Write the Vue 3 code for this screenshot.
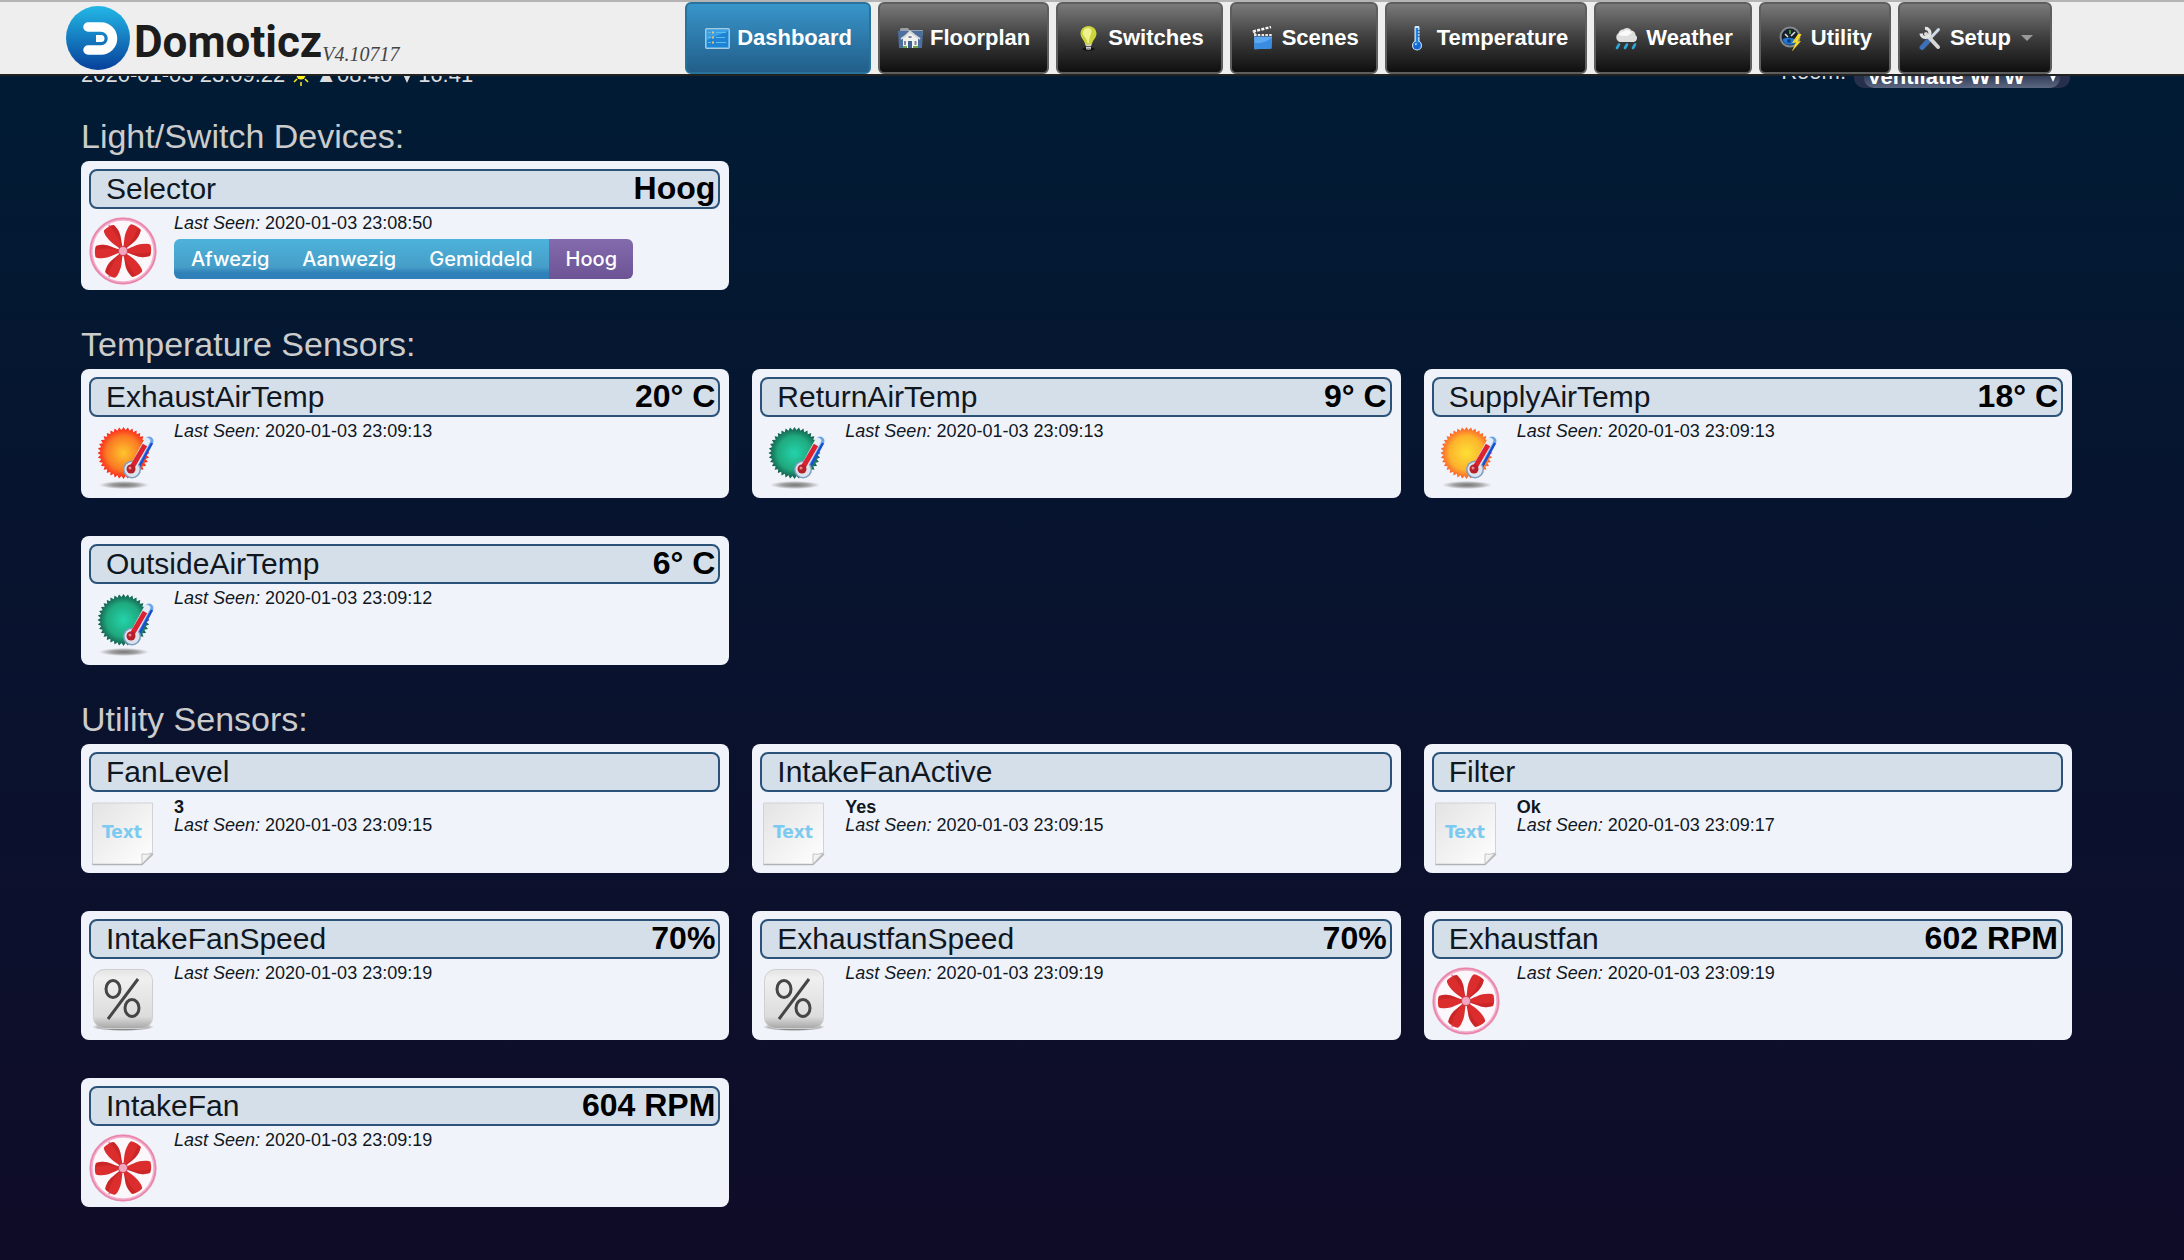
<template>
  <div class="page">
    <header class="navbar">
      <a class="brand" href="#dashboard">
        <svg class="logo" viewBox="0 0 64 64">
          <defs>
            <linearGradient id="logo-fill" x1="0" y1="0" x2="0" y2="1">
              <stop offset="0" stop-color="#22b8e6" />
              <stop offset="1" stop-color="#07409b" />
            </linearGradient>
          </defs>
          <circle cx="32" cy="32" r="32" fill="url(#logo-fill)" />
          <path d="M22 21H35a11 11 0 0 1 0 23H22" fill="none" stroke="#fff" stroke-width="9.5" stroke-linecap="round" />
          <path d="M30 29h5a3.5 3.5 0 0 1 0 7h-5z" fill="#fff" />
        </svg>
        <span class="brand-name">Domoticz</span>
        <span class="version">V4.10717</span>
      </a>
      <nav class="menu">
        <a v-for="item in menu" :key="item.icon" :href="'#' + item.icon" class="menu-item" :class="{ active: item.icon === 'dashboard' }">
          <svg class="menu-icon" viewBox="0 0 25 25">
            <g v-if="item.icon === 'dashboard'">
              <rect x=".7" y="2.7" width="23.6" height="19.6" rx="1" fill="#3aa0e6" stroke="#a9cbe0" stroke-width="1.3" />
              <path d="M2 14 23 5v16H2z" fill="#1f83d4" />
              <path d="M11 6.5h10M11 11.5h9M11 16.5h10M3 6.5h3M3 11.5h3M3 16.5h3" stroke="#5fbcf0" stroke-width="1" />
              <path d="M7 5.5h2v2H7zM7 10.5h2v2H7zM7 15.5h2v2H7z" fill="#f0bf62" />
            </g>
            <g v-else-if="item.icon === 'floorplan'">
              <path d="M2 3.500q0-1.500 1.500-1.500H10l1.500 2H25v5H2z" fill="#99a0a6" />
              <path d="M0 5h25l-1 17H1z" fill="#4d6f9e" />
              <path d="M5 12 12 6.500 20 12v10H5z" fill="#f1f1ee" />
              <path d="M3 13 8 9.500l4-4 5 4 5 3.500" fill="none" stroke="#d7d9db" stroke-width="2" />
              <path d="M10 15h4v7h-4z" fill="#415f91" />
              <path d="M10.500 10h3v2h-3zM6 15h2v4H6zM16.500 15h2v4h-2z" fill="#7988a0" />
              <path d="M5 20h4v2H5zM15 20h5v2h-5z" fill="#68a844" />
            </g>
            <g v-else-if="item.icon === 'switches'">
              <ellipse cx="12.500" cy="23" rx="6" ry="1.700" fill="#111" />
              <path d="M12.500 0C7.500 0 4.500 3.700 4.500 7.600c0 4.500 4.300 6.800 4.900 12h6.200c.6-5.200 4.900-7.500 4.900-12C20.500 3.700 17.500 0 12.500 0z" fill="#cbd43d" />
              <path d="M12 2C8.500 2 6.500 5 7 8c1 3 4 4 4.500 9h1.500C13 10 16 8 15.500 4.500 15 2.800 13.500 2 12 2z" fill="#eff290" />
              <path d="M10 18.500h5v4.500q-2.500 2-5 0z" fill="#cfd0d2" />
              <path d="M10 20.500h5M10.500 23h4" stroke="#5a5a5a" />
            </g>
            <g v-else-if="item.icon === 'scenes'">
              <path d="M4 10.500h18l-.6 12-17 .8z" fill="#5ba9f3" />
              <path d="M4.500 17q10 1 17-5v10.500l-17 .8z" fill="#398de0" />
              <path d="M4 9h18" stroke="#eee" stroke-width="2.200" stroke-dasharray="2.500 1.300" />
              <path d="M3 5.500 21 1" stroke="#f6f6f6" stroke-width="2.500" stroke-dasharray="3 1.300" />
              <path d="m3 5 3 4" stroke="#ddd" stroke-width="1.500" />
            </g>
            <g v-else-if="item.icon === 'temperature'">
              <path d="M12 2v17" stroke="#d3ecfb" stroke-width="5" stroke-linecap="round" />
              <circle cx="12" cy="19.500" r="5" fill="#cfe6f5" />
              <circle cx="12" cy="19.500" r="3.900" fill="#1167d6" />
              <path d="M12 2v16" stroke="#1e83e4" stroke-width="2.500" />
              <path d="M12.500 4.500H15M12.500 7.500H15M12.500 10.500H15" stroke="#2d6ca5" />
              <circle cx="10.800" cy="18.300" r="1" fill="#b9deff" />
            </g>
            <g v-else-if="item.icon === 'weather'">
              <path d="M6 16a5 5 0 0 1-1.500-9A5 5 0 0 1 9 3.500a5.500 5.500 0 0 1 8.500 1 5 5 0 0 1 4 4.500 4 4 0 0 1-1.500 7z" fill="#dedede" />
              <path d="M5 9.500a4 4 0 0 1 5-4 5 5 0 0 1 8 1.500l-5 3z" fill="#fafafa" />
              <path d="M5 18.500 3 22M13 18.500 11 22M21 18.500 19 22" stroke="#2fa7d8" stroke-width="2.600" stroke-linecap="round" />
            </g>
            <g v-else-if="item.icon === 'utility'">
              <circle cx="11" cy="11" r="9.500" fill="#182029" stroke="#838b90" stroke-width="2" />
              <path d="M3.500 13.500Q7 10 18.500 13.500A8 8 0 0 1 3.500 13.500z" fill="#2178db" />
              <path d="M6 8l3 3M16 6l-4 4" stroke="#dce5ea" stroke-width="1.500" />
              <path d="M11 4v4" stroke="#57b94b" stroke-width="1.500" />
              <circle cx="10" cy="15" r="2" fill="#0e3e7b" />
              <path d="m19 8-6 9 4-.5L12.500 26 22 15l-3.500.5 4-7.500z" fill="#f5d928" />
            </g>
            <g v-else>
              <path d="M20.500 3.500 4 21" stroke="#cfdce6" stroke-width="3" stroke-linecap="round" />
              <path d="M11.500 13.500 4 21.500" stroke="#3e70b8" stroke-width="5" stroke-linecap="round" />
              <path d="M8 8l12 13" stroke="#d7d7d5" stroke-width="4" stroke-linecap="round" />
              <path d="M7 2.500A4.500 4.500 0 1 1 3 7.500" fill="none" stroke="#e3e3e1" stroke-width="3.200" />
            </g>
          </svg>
          <span>{{ item.label }}</span>
          <i v-if="item.icon === 'setup'" class="caret"></i>
        </a>
      </nav>
    </header>

    <main class="content">
      <div class="status">
        <div class="clock">
          <span>2020-01-03 23:09:22</span>
          <svg class="sun" viewBox="0 0 18 22">
            <circle cx="9" cy="11" r="4.500" fill="#ffef1f" />
            <path d="M9 1v3M9 18v4M0 11h3M15 11h3M2 4l3 3M16 4l-3 3M2 18l3-3M16 18l-3-3" stroke="#ffef1f" stroke-width="1.500" />
          </svg>
          <span>▲08:40</span>
          <svg class="sunset" viewBox="0 0 10 12"><path d="M0 1h10L5 12z" fill="#ddd" /></svg>
          <span>16:41</span>
        </div>
        <div class="room">
          <label for="room">Room:</label>
          <span class="room-box">
            <select id="room" v-model="room">
              <option>Ventilatie WTW</option>
            </select>
            <svg class="room-arrow" viewBox="0 0 10 12"><path d="M0 1h10L5 12z" fill="#fff" /></svg>
          </span>
        </div>
      </div>

      <section v-for="section in sections" :key="section.title">
        <h2>{{ section.title }}</h2>
        <div class="cards">
          <article v-for="device in section.devices" :key="device.name" class="card">
            <div class="card-title">
              <span class="name">{{ device.name }}</span>
              <span class="status-value">{{ device.value }}</span>
            </div>
            <div class="card-body">
              <svg class="device-icon" viewBox="0 0 68 68">
                <g v-if="device.icon === 'fan'">
                  <circle cx="34" cy="34" r="32" fill="#fbf7fb" stroke="#f3b1cb" stroke-width="3.500" />
                  <circle cx="34" cy="34" r="32.500" fill="none" stroke="#e884ab" stroke-width="1.500" />
                  <path d="M34 34 20 8M34 34 62 35M34 34 20 60" stroke="#e77ba5" stroke-width="2" />
                  <g v-for="angle in blades" :key="angle" :transform="`rotate(${angle} 34 34)`">
                    <path d="M36 33C42 31 47 27.500 53 27Q60 26 61.500 28Q63 34 61 39Q55 41 49 39.500C44 38 41 36 36 35.500z" fill="#db2d2d" />
                    <path d="M38 35C46 37 54 37 62 35Q62 37 61 39Q55 41 49 39.500C44 38 41 36 38 35z" fill="#b82021" opacity=".45" />
                  </g>
                  <circle cx="34" cy="34" r="5" fill="#c64757" />
                  <circle cx="34" cy="34" r="4" fill="#f2a6bf" />
                </g>
                <g v-else-if="device.icon === 'text'">
                  <defs>
                    <linearGradient id="paper" x1="0" y1="0" x2="1" y2="1">
                      <stop offset="0" stop-color="#e3e3e3" />
                      <stop offset="1" stop-color="#fff" />
                    </linearGradient>
                  </defs>
                  <path d="M3.500 3h60v51L53 64.500H3.500z" fill="url(#paper)" stroke="#d0d2d5" />
                  <path d="M3.500 64.500H53L64 54" fill="none" stroke="#b0b3b6" stroke-width="1.500" />
                  <path d="M53 64V54q5 1 10-1z" fill="#f3f3f3" stroke="#c2c5c8" />
                  <text x="13" y="38" class="paper-text">Text</text>
                </g>
                <g v-else-if="device.icon === 'percent'">
                  <defs>
                    <linearGradient id="key" x1="0" y1="0" x2="0" y2="1">
                      <stop offset="0" stop-color="#e4e4e4" />
                      <stop offset=".15" stop-color="#f0f0f0" />
                      <stop offset=".8" stop-color="#dcdcdc" />
                      <stop offset="1" stop-color="#a6a6a6" />
                    </linearGradient>
                    <radialGradient id="key-shadow">
                      <stop offset=".7" stop-color="#8a8a8a" />
                      <stop offset="1" stop-color="#8a8a8a" stop-opacity="0" />
                    </radialGradient>
                  </defs>
                  <ellipse cx="34" cy="60" rx="31" ry="4" fill="url(#key-shadow)" />
                  <rect x="4.500" y="2.500" width="59" height="59" rx="11" fill="url(#key)" stroke="#cfcfd2" />
                  <!-- percent sign: two rings and a bar -->
                  <ellipse cx="24" cy="22" rx="7" ry="8.500" fill="none" stroke="#454545" stroke-width="3" />
                  <ellipse cx="43" cy="41" rx="7" ry="8.500" fill="none" stroke="#454545" stroke-width="3" />
                  <path d="M49 12 19 52" stroke="#454545" stroke-width="3" />
                </g>
                <g v-else>
                  <defs>
                    <radialGradient :id="'sun-' + device.icon">
                      <stop offset="0" :stop-color="suns[device.icon][0]" />
                      <stop offset=".65" :stop-color="suns[device.icon][1]" />
                      <stop offset="1" :stop-color="suns[device.icon][2]" />
                    </radialGradient>
                    <radialGradient id="sun-shadow">
                      <stop offset="0" stop-color="#777" />
                      <stop offset=".5" stop-color="#888" stop-opacity=".8" />
                      <stop offset="1" stop-color="#888" stop-opacity="0" />
                    </radialGradient>
                  </defs>
                  <ellipse cx="35" cy="60" rx="25" ry="4" fill="url(#sun-shadow)" />
                  <polygon :points="sunShape" :fill="`url(#sun-${device.icon})`" />
                  <path d="M45 43 60 16" stroke="#6fa6e8" stroke-width="9" stroke-linecap="round" />
                  <path d="m50 42 13-24" stroke="#1b4fd2" stroke-width="2.500" />
                  <circle cx="43" cy="44.500" r="9" fill="#7d9cc0" />
                  <path d="M43 44 58 16" stroke="#e4edf6" stroke-width="6.500" stroke-linecap="round" />
                  <circle cx="43" cy="44.500" r="7.500" fill="#dbe4ed" />
                  <path d="M42 44 56 20" stroke="#dc2230" stroke-width="5" />
                  <circle cx="42" cy="44" r="4.500" fill="#b51f2b" />
                  <circle cx="41" cy="43" r="1.500" fill="#e7888c" />
                </g>
              </svg>
              <div class="info">
                <strong v-if="device.text" class="text-value">{{ device.text }}</strong>
                <div><em>Last Seen:</em> 2020-01-03 {{ device.seen }}</div>
                <div v-if="device.levels" class="levels">
                  <button v-for="name in device.levels" :key="name" type="button" :class="{ selected: level === name }" @click="level = name">{{ name }}</button>
                </div>
              </div>
            </div>
          </article>
        </div>
      </section>
    </main>
  </div>
</template>

<script setup>
import { ref } from 'vue';

const room = ref('Ventilatie WTW');
const level = ref('Hoog');

const menu = [
  { icon: 'dashboard', label: 'Dashboard' },
  { icon: 'floorplan', label: 'Floorplan' },
  { icon: 'switches', label: 'Switches' },
  { icon: 'scenes', label: 'Scenes' },
  { icon: 'temperature', label: 'Temperature' },
  { icon: 'weather', label: 'Weather' },
  { icon: 'utility', label: 'Utility' },
  { icon: 'setup', label: 'Setup' },
];

const sections = [
  {
    title: 'Light/Switch Devices:',
    devices: [
      { name: 'Selector', value: 'Hoog', icon: 'fan', seen: '23:08:50', levels: ['Afwezig', 'Aanwezig', 'Gemiddeld', 'Hoog'] },
    ],
  },
  {
    title: 'Temperature Sensors:',
    devices: [
      { name: 'ExhaustAirTemp', value: '20° C', icon: 'hot', seen: '23:09:13' },
      { name: 'ReturnAirTemp', value: '9° C', icon: 'cold', seen: '23:09:13' },
      { name: 'SupplyAirTemp', value: '18° C', icon: 'warm', seen: '23:09:13' },
      { name: 'OutsideAirTemp', value: '6° C', icon: 'cold', seen: '23:09:12' },
    ],
  },
  {
    title: 'Utility Sensors:',
    devices: [
      { name: 'FanLevel', text: '3', icon: 'text', seen: '23:09:15' },
      { name: 'IntakeFanActive', text: 'Yes', icon: 'text', seen: '23:09:15' },
      { name: 'Filter', text: 'Ok', icon: 'text', seen: '23:09:17' },
      { name: 'IntakeFanSpeed', value: '70%', icon: 'percent', seen: '23:09:19' },
      { name: 'ExhaustfanSpeed', value: '70%', icon: 'percent', seen: '23:09:19' },
      { name: 'Exhaustfan', value: '602 RPM', icon: 'fan', seen: '23:09:19' },
      { name: 'IntakeFan', value: '604 RPM', icon: 'fan', seen: '23:09:19' },
    ],
  },
];

const blades = [0, 60, 120, 180, 240, 300];

// centre, middle and rim colour of each sun
const suns = {
  hot: ['#fdc52c', '#fb7a24', '#fb1f1c'],
  warm: ['#fde036', '#fdb32c', '#fb5a2a'],
  cold: ['#24d3ab', '#1fa97e', '#12584a'],
};

// jagged disc: the points alternate between the outer and inner radius
const sunShape = Array.from({ length: 72 }, (_, i) => {
  const r = i % 2 ? 23 : 26;
  const a = (i * Math.PI) / 36;
  return `${(34.5 + r * Math.cos(a)).toFixed(1)},${(28 + r * Math.sin(a)).toFixed(1)}`;
}).join(' ');
</script>

<style>
body {
  background: #0e0b27;
}
</style>

<style scoped>
.page {
  min-height: 100vh;
  background: linear-gradient(#001d35, #07142f 40%, #0d0f2b 80%, #0f0c27);
  font-family: "Liberation Sans", Arial, sans-serif;
  color: #10171f;
}

.navbar {
  position: fixed;
  top: 0;
  left: 0;
  right: 0;
  z-index: 10;
  box-sizing: border-box;
  height: 76px;
  padding: 0 132px 0 66px;
  display: flex;
  justify-content: space-between;
  background: #eee;
  border-top: 2px solid #b4b4b4;
  border-bottom: 2px solid #222;
}

.brand {
  display: flex;
  align-items: center;
  color: #1c1c1c;
  text-decoration: none;
}

.logo {
  width: 64px;
  height: 64px;
  margin-right: 4px;
}

.brand-name {
  padding-top: 8px;
  font-family: Roboto, "Liberation Sans", sans-serif;
  font-size: 44px;
  font-weight: bold;
  line-height: 44px;
}

.version {
  align-self: flex-end;
  padding-bottom: 8px;
  font-family: "Liberation Serif", serif;
  font-size: 20px;
  font-style: italic;
  color: #444;
}

.menu {
  display: flex;
  gap: 7px;
}

.menu-item {
  display: flex;
  align-items: center;
  gap: 7px;
  padding: 0 17px 0 18px;
  border: 2px solid #5e5e5e;
  border-radius: 6px;
  background: linear-gradient(#7a7a7a, #3d3d3d 50%, #0f0f0f);
  color: #fff;
  font-size: 22px;
  font-weight: bold;
  text-decoration: none;
}

.menu-item.active {
  border-color: #27739c;
  background: linear-gradient(#3895c9, #225e8a);
}

.menu-icon {
  width: 25px;
  height: 25px;
}

.caret {
  margin-left: 3px;
  border-top: 6px solid #999;
  border-left: 6px solid transparent;
  border-right: 6px solid transparent;
}

.content {
  padding: 56px 112px 53px 81px;
}

.status {
  display: flex;
  justify-content: space-between;
  align-items: flex-start;
  height: 33px;
  margin-bottom: 27px;
  font-size: 22px;
  color: #ddd;
}

.clock {
  display: flex;
  align-items: center;
  line-height: 38px;
}

.sun {
  width: 18px;
  height: 22px;
  margin: 0 5px 0 7px;
}

.sunset {
  width: 10px;
  height: 12px;
  margin: 4px 6px 0 10px;
}

.room {
  display: flex;
  gap: 8px;
  padding-right: 2px;
  line-height: 32px;
}

.room-box {
  position: relative;
  padding: 0 10px;
  border-radius: 0 0 10px 10px;
  background: #26304c;
}

.room-box select {
  display: block;
  appearance: none;
  width: 196px;
  height: 32px;
  padding: 9px 3px 0;
  border: 0;
  border-radius: 0 0 10px 10px;
  background: linear-gradient(#26324b 50%, #5b6680);
  color: #fff;
  font: bold 22px/22px "Liberation Sans", Arial, sans-serif;
}

.room-arrow {
  position: absolute;
  right: 12px;
  bottom: 6px;
  width: 10px;
  height: 12px;
}

h2 {
  margin: 0 0 5px;
  font-size: 34px;
  font-weight: normal;
  line-height: 40px;
  color: #ccc;
}

section + section {
  margin-top: 34px;
}

.cards {
  display: grid;
  grid-template-columns: repeat(3, 1fr);
  gap: 38px 23px;
}

.card {
  box-sizing: border-box;
  min-height: 129px;
  padding: 8px 9px 4px 8px;
  border-radius: 8px;
  background: #f0f4fa;
}

.card-title {
  box-sizing: border-box;
  height: 40px;
  padding: 0 3px 0 15px;
  display: flex;
  justify-content: space-between;
  align-items: baseline;
  border: 2px solid #2b5379;
  border-radius: 8px;
  background: #d4dfea;
}

.name {
  font-size: 30px;
  line-height: 36px;
}

.status-value {
  font-size: 32px;
  font-weight: bold;
  line-height: 34px;
  color: #000;
}

.card-body {
  display: flex;
  gap: 17px;
}

.device-icon {
  flex: none;
  width: 68px;
  height: 68px;
  margin-top: 8px;
}

.paper-text {
  font: bold 17px "DejaVu Sans", sans-serif;
  fill: #7ccaf0;
}

.info {
  padding-top: 5px;
  font-size: 18px;
  line-height: 18px;
}

.text-value {
  display: block;
  margin-top: 1px;
}

.levels {
  display: flex;
  margin-top: 7px;
  border-radius: 6px;
  overflow: hidden;
}

.levels button {
  height: 40px;
  padding: 0 16px 0 17px;
  border: 0;
  background: linear-gradient(#4db3da, #469dc8 70%, #2f80b8 85%);
  color: #fff;
  font: 500 20px Inter, sans-serif;
  cursor: pointer;
}

.levels button.selected {
  background: linear-gradient(#836bae, #6b5394);
}
</style>
